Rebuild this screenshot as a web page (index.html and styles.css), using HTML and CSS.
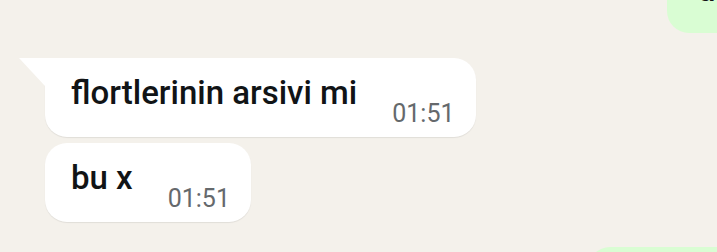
FILE: index.html
```html
<!DOCTYPE html>
<html>
<head>
  <title>Chat</title>
  <meta charset="UTF-8">
  <link rel="stylesheet" href="styles.css">
</head>
<body>
  <div class="chat">
    <div class="bubble out top-cut">
      <span class="msg">de</span>
    </div>

    <div class="bubble in first">
      <span class="msg">flortlerinin arsivi mi</span>
      <span class="time">01:51</span>
    </div>

    <div class="bubble in">
      <span class="msg">bu x</span>
      <span class="time">01:51</span>
    </div>

    <div class="bubble out bottom-cut"></div>
  </div>
</body>
</html>
```

FILE: styles.css
```css
body {
  margin: 0;
  height: 252px;
  overflow: hidden;
  background-color: #f4f1eb;
  font-family: Roboto, 'Noto Sans', sans-serif;
}

.chat {
  display: flex;
  flex-direction: column;
  align-items: flex-start;
  padding-left: 45px;
}

.bubble {
  position: relative;
  display: flex;
  align-items: flex-start;
  padding: 15px 21px 9px 26px;
  border-radius: 22px;
  background-color: #ffffff;
  box-shadow: 0 1px 1px rgba(0, 0, 0, 0.08);
}

.bubble.in {
  margin-top: 6px;
}

.bubble.in.first {
  margin-top: 25px;
  border-top-left-radius: 0;
}

.bubble.in.first::before {
  content: "";
  position: absolute;
  left: -26px;
  top: 0;
  width: 26px;
  height: 28px;
  background-color: #ffffff;
  clip-path: polygon(0 0, 100% 0, 100% 100%);
}

.msg {
  font-size: 33px;
  font-weight: 500;
  line-height: 40px;
  color: #111416;
  margin-right: 35px;
}

.time {
  font-size: 25px;
  line-height: 29px;
  margin-top: 26px;
  color: #65696c;
}

.bubble.out {
  align-self: flex-end;
  background-color: #d9fdd3;
  box-shadow: none;
  box-sizing: border-box;
}

.bubble.out.top-cut {
  margin-top: -60px;
  margin-right: -40px;
  width: 90px;
  height: 93px;
  padding: 30px 0 0 30px;
}

.bubble.out.bottom-cut {
  margin-top: 25px;
  margin-right: -40px;
  width: 169px;
  height: 60px;
}
```
